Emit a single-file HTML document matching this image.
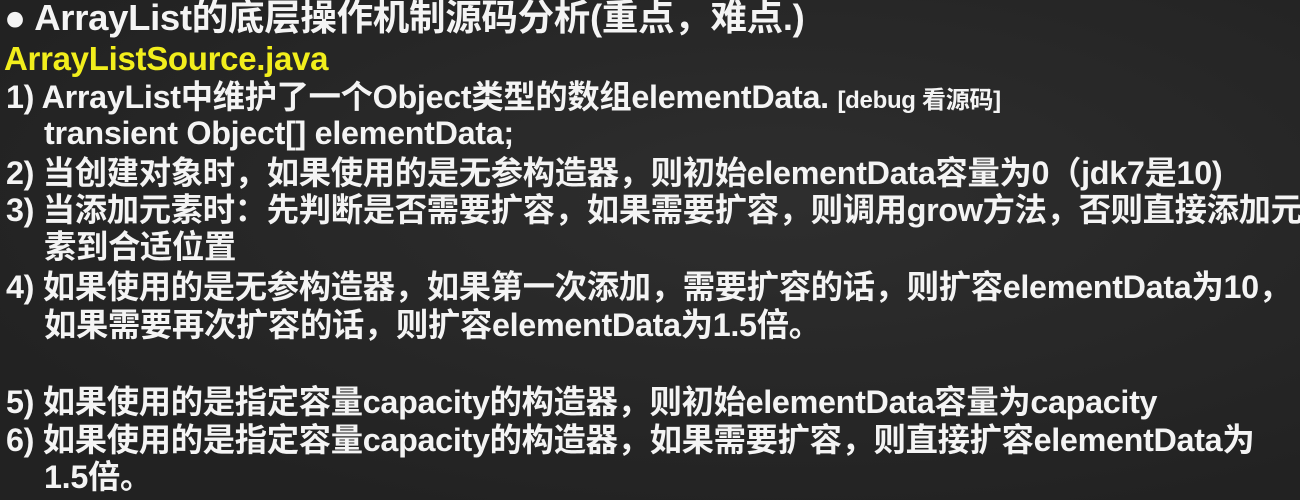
<!DOCTYPE html><html><head><meta charset="utf-8"><style>
html,body{margin:0;padding:0}
body{width:1300px;height:500px;overflow:hidden;background:#272727;background-image:radial-gradient(ellipse at 60% 40%,#2e2e2e,#222 80%);font-family:"Liberation Sans","Noto Sans CJK SC",sans-serif;font-weight:bold;color:#f4f4f4;position:relative}
.l{position:absolute;left:6px;font-size:32.3px;line-height:38px;white-space:nowrap;letter-spacing:-0.3px}
.y{color:#f2ee1c}
.s{font-size:24px}
.i{left:44px}
</style></head><body>
<div class="l" style="top:-1px;font-size:36.5px;left:4px">● ArrayList的底层操作机制源码分析(重点，难点.)</div>
<div class="l y" style="top:40px;left:4px;font-size:33px">ArrayListSource.java</div>
<div class="l" style="top:78px">1) ArrayList中维护了一个Object类型的数组elementData. <span class="s">[debug 看源码]</span></div>
<div class="l i" style="top:114px">transient Object[] elementData;</div>
<div class="l" style="top:154px">2) 当创建对象时，如果使用的是无参构造器，则初始elementData容量为0（jdk7是10)</div>
<div class="l" style="top:191px">3) 当添加元素时：先判断是否需要扩容，如果需要扩容，则调用grow方法，否则直接添加元</div>
<div class="l i" style="top:228px">素到合适位置</div>
<div class="l" style="top:268px">4) 如果使用的是无参构造器，如果第一次添加，需要扩容的话，则扩容elementData为10，</div>
<div class="l i" style="top:306px">如果需要再次扩容的话，则扩容elementData为1.5倍。</div>
<div class="l" style="top:383px">5) 如果使用的是指定容量capacity的构造器，则初始elementData容量为capacity</div>
<div class="l" style="top:421px">6) 如果使用的是指定容量capacity的构造器，如果需要扩容，则直接扩容elementData为</div>
<div class="l i" style="top:458px">1.5倍。</div>
</body></html>
